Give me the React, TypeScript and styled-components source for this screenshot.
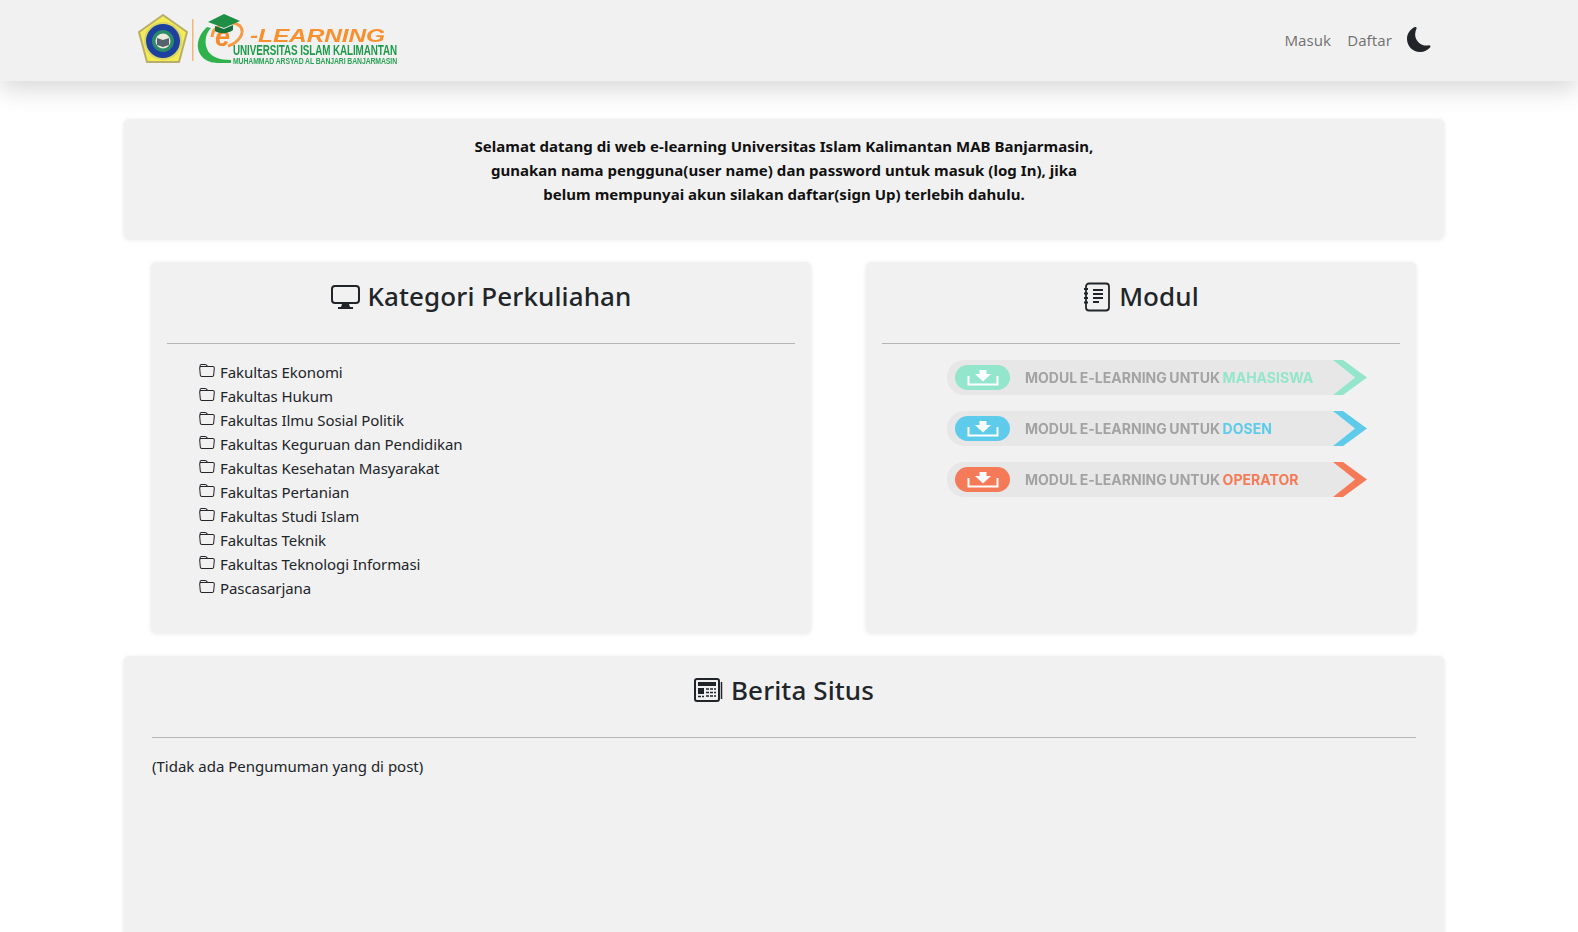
import styled, { createGlobalStyle } from 'styled-components';
import { BsFolder, BsMoonFill } from 'react-icons/bs';

const GlobalStyle = createGlobalStyle`
  html, body {
    margin: 0;
    height: 932px;
    overflow: hidden;
    background: #fff;
  }
  body {
    font-family: "Noto Sans", "Open Sans", sans-serif;
    font-size: 15px;
    line-height: 24px;
    color: #212529;
    letter-spacing: -0.08px;
  }
`;

const Navbar = styled.nav`
  height: 81px;
  background: #f1f1f1;
  box-shadow: 0 8px 24px rgba(0, 0, 0, 0.16);
  display: flex;
  align-items: center;
  justify-content: space-between;
  padding: 0 146px 0 136px;
  box-sizing: border-box;
`;

const NavRight = styled.div`
  display: flex;
  align-items: center;
  gap: 16px;
`;

const NavLink = styled.a`
  color: rgba(0, 0, 0, 0.55);
  letter-spacing: 0.05px;
  margin-top: -1px;
`;

const MoonButton = styled.span`
  display: flex;
  color: #212529;
  font-size: 25px;
  margin: -3px 0 0 -1px;
`;

const Container = styled.main`
  width: 1320px;
  margin: 38px 0 0 124px;
  display: flex;
  flex-direction: column;
  gap: 23px;
`;

const Card = styled.section`
  background: #f1f1f1;
  border-radius: 5px;
  box-shadow: 0 1px 5px rgba(0, 0, 0, 0.09);
  box-sizing: border-box;
`;

const WelcomeCard = styled(Card)`
  height: 120px;
  padding: 15px 16px;
  text-align: center;
  font-weight: 700;
  letter-spacing: 0.03px;
  color: #111;
`;

const ColumnRow = styled.div`
  display: grid;
  grid-template-columns: 660px 550px;
  column-gap: 55px;
  padding-left: 27px;
`;

const ColumnCard = styled(Card)`
  height: 371px;
  padding: 16px;
`;

const NewsCard = styled(Card)`
  height: 400px;
  padding: 16px 28px;
`;

const Heading = styled.h3<{ $gap: number }>`
  margin: 0;
  height: 65px;
  font-size: 26px;
  line-height: 36px;
  font-weight: 500;
  letter-spacing: 0.1px;
  display: flex;
  justify-content: center;
  gap: ${({ $gap }) => $gap}px;
  svg {
    flex: none;
    margin-top: 4px;
  }
`;

const Rule = styled.hr`
  margin: 0;
  border: 0;
  border-top: 1px solid #b4b4b4;
`;

const FacultyList = styled.ul`
  list-style: none;
  margin: 16px 0 0;
  padding: 0 0 0 32px;
`;

const FacultyItem = styled.li`
  display: flex;
  align-items: center;
  gap: 5px;
  height: 24px;
  svg {
    font-size: 16px;
    margin-top: -3px;
  }
`;

const BannerList = styled.div`
  display: flex;
  flex-direction: column;
  gap: 16px;
  margin-top: 16px;
  padding-left: 65px;
`;

const Banner = styled.a`
  position: relative;
  display: flex;
  align-items: center;
  width: 420px;
  height: 35px;
  filter: blur(0.5px);
`;

const BannerTrack = styled.div`
  width: 408px;
  height: 100%;
  box-sizing: border-box;
  padding-left: 8px;
  background: #e7e7e7;
  border-radius: 17px 0 0 17px;
  clip-path: polygon(0 0, calc(100% - 22px) 0, 100% 50%, calc(100% - 22px) 100%, 0 100%);
  display: flex;
  align-items: center;
  gap: 15px;
`;

const DownloadPill = styled.span<{ $color: string }>`
  width: 55px;
  height: 25px;
  border-radius: 12.5px;
  background: ${({ $color }) => $color};
  display: flex;
  align-items: center;
  justify-content: center;
`;

const BannerLabel = styled.span`
  font-family: "Inter", sans-serif;
  font-size: 14px;
  font-weight: 700;
  letter-spacing: 0.02px;
  word-spacing: -0.8px;
  color: #a3a3a3;
  white-space: nowrap;
`;

const BannerAccent = styled.span<{ $color: string }>`
  color: ${({ $color }) => $color};
`;

const BannerArrow = styled.svg`
  position: absolute;
  right: 0;
  top: 0;
`;

const LogoMark = styled.svg`
  filter: blur(0.4px);
  margin-top: 1px;
`;

const NewsText = styled.p`
  margin: 16px 0 0;
  letter-spacing: 0;
`;

const FACULTIES = [
  'Fakultas Ekonomi',
  'Fakultas Hukum',
  'Fakultas Ilmu Sosial Politik',
  'Fakultas Keguruan dan Pendidikan',
  'Fakultas Kesehatan Masyarakat',
  'Fakultas Pertanian',
  'Fakultas Studi Islam',
  'Fakultas Teknik',
  'Fakultas Teknologi Informasi',
  'Pascasarjana',
];

const MODULES = [
  { role: 'MAHASISWA', color: '#93e6cb' },
  { role: 'DOSEN', color: '#5ecbea' },
  { role: 'OPERATOR', color: '#f47a58' },
];

const LOGO_FONT = 'Liberation Sans, sans-serif';

const Logo = () => (
  <LogoMark width="264" height="56" viewBox="0 0 264 56">
    {/* emblem */}
    <path d="M27 2 L51 19 L43 49 L11 49 L3 19 Z" fill="#f4ec55" stroke="#b9ad6a" strokeWidth="2" strokeLinejoin="round" />
    <circle cx="27" cy="28" r="19" fill="#d8d36a" />
    <circle cx="27" cy="28" r="17" fill="#1d3f9e" />
    <circle cx="27" cy="28" r="11" fill="#2c8a6a" />
    <circle cx="27" cy="28" r="7.500" fill="#eceadb" />
    <path d="M21 25l6 2 6-2v7l-6 2-6-2z" fill="#56636e" />
    {/* divider */}
    <rect x="56" y="6" width="1.500" height="42" fill="#f3b57c" />
    {/* swoosh */}
    <path d="M71 14 C60 24 58 39 70 47 C76 51 86 50 95 50 L95 47 C84 47 74 44 71 36 C68 28 70 20 75 15 Z" fill="#2fb24c" />
    <path d="M76 24 C76 12 96 6 104 13 C110 20 102 30 92 33" fill="none" stroke="#f79a42" strokeWidth="3" />
    <text x="79" y="33" fontFamily={LOGO_FONT} fontSize="27" fontWeight="700" fontStyle="italic" fill="#f58a2c">e</text>
    {/* cap */}
    <path d="M72 9 L88 1 L104 8 L88 15 Z" fill="#1f8f45" />
    <path d="M79 13 L79 18 C83 21 92 21 97 17 L97 12 L88 16 Z" fill="#17723a" />
    {/* wordmark */}
    <text x="114" y="29" fontFamily={LOGO_FONT} fontSize="18" fontWeight="700" fontStyle="italic" fill="#f7902e" textLength="135" lengthAdjust="spacingAndGlyphs">-LEARNING</text>
    <text transform="translate(97 42) scale(1 1.650)" fontFamily={LOGO_FONT} fontSize="8.500" fontWeight="700" fill="#1f9a4a" textLength="164" lengthAdjust="spacingAndGlyphs">UNIVERSITAS ISLAM KALIMANTAN</text>
    <text transform="translate(97 51) scale(1 1.500)" fontFamily={LOGO_FONT} fontSize="6" fontWeight="700" fill="#2aa355" textLength="164" lengthAdjust="spacingAndGlyphs">MUHAMMAD ARSYAD AL BANJARI BANJARMASIN</text>
  </LogoMark>
);

const MonitorIcon = () => (
  <svg width="29" height="28" viewBox="0 0 29 28" fill="none">
    <rect x="1" y="4" width="27" height="17" rx="3" stroke="#212529" strokeWidth="2" />
    <path d="M11 22h7l1 3h3v2H7v-2h3z" fill="#212529" />
  </svg>
);

const JournalIcon = () => (
  <svg width="27" height="30" viewBox="0 0 27 30" fill="none">
    <rect x="3" y="1.500" width="23" height="27" rx="3" stroke="#212529" strokeWidth="1.800" />
    <path d="M10 8h10M10 12h10M10 16h10M10 20h6" stroke="#212529" strokeWidth="1.800" />
    <path d="M1 7h4M1 11.500h4M1 16h4M1 20.500h4" stroke="#212529" strokeWidth="2" />
  </svg>
);

const NewspaperIcon = () => (
  <svg width="29" height="28" viewBox="0 0 29 28" fill="none">
    <rect x="1" y="3" width="24" height="22" rx="2" stroke="#212529" strokeWidth="2" />
    <rect x="4" y="6" width="18" height="4" fill="#212529" />
    <rect x="4" y="12" width="6" height="6" fill="#212529" />
    <path d="M12 13h10M12 16.500h10M12 20h10M4 20.500h6" stroke="#212529" strokeWidth="1.500" strokeDasharray="3 1" />
    <path d="M27.500 6v17" stroke="#212529" strokeWidth="1.500" />
  </svg>
);

const DownloadGlyph = () => (
  <svg width="32" height="16" viewBox="0 0 32 16" fill="none">
    <path d="M12.500 0h7v4h4.500l-8 7.500-8-7.500h4.500z" fill="#fff" />
    <path d="M1.500 6v8.500h29V6" stroke="#fff" strokeWidth="2" />
  </svg>
);

export default function App() {
  return (
    <>
      <GlobalStyle />
      <Navbar>
        <Logo />
        <NavRight>
          <NavLink>Masuk</NavLink>
          <NavLink>Daftar</NavLink>
          <MoonButton>
            <BsMoonFill />
          </MoonButton>
        </NavRight>
      </Navbar>

      <Container>
        <WelcomeCard>
          Selamat datang di web e-learning Universitas Islam Kalimantan MAB Banjarmasin,
          <br />
          gunakan nama pengguna(user name) dan password untuk masuk (log In), jika
          <br />
          belum mempunyai akun silakan daftar(sign Up) terlebih dahulu.
        </WelcomeCard>

        <ColumnRow>
          <ColumnCard>
            <Heading $gap={8}>
              <MonitorIcon />
              Kategori Perkuliahan
            </Heading>
            <Rule />
            <FacultyList>
              {FACULTIES.map((name) => (
                <FacultyItem key={name}>
                  <BsFolder />
                  {name}
                </FacultyItem>
              ))}
            </FacultyList>
          </ColumnCard>

          <ColumnCard>
            <Heading $gap={9}>
              <JournalIcon />
              Modul
            </Heading>
            <Rule />
            <BannerList>
              {MODULES.map((mod) => (
                <Banner key={mod.role}>
                  <BannerTrack>
                    <DownloadPill $color={mod.color}>
                      <DownloadGlyph />
                    </DownloadPill>
                    <BannerLabel>
                      MODUL E-LEARNING UNTUK <BannerAccent $color={mod.color}>{mod.role}</BannerAccent>
                    </BannerLabel>
                  </BannerTrack>
                  <BannerArrow width="36" height="35" viewBox="0 0 36 35">
                    <path d="M2 0 L24 17.500 L2 35 L12 35 L36 17.500 L12 0 Z" fill={mod.color} />
                  </BannerArrow>
                </Banner>
              ))}
            </BannerList>
          </ColumnCard>
        </ColumnRow>

        <NewsCard>
          <Heading $gap={8}>
            <NewspaperIcon />
            Berita Situs
          </Heading>
          <Rule />
          <NewsText>(Tidak ada Pengumuman yang di post)</NewsText>
        </NewsCard>
      </Container>
    </>
  );
}
